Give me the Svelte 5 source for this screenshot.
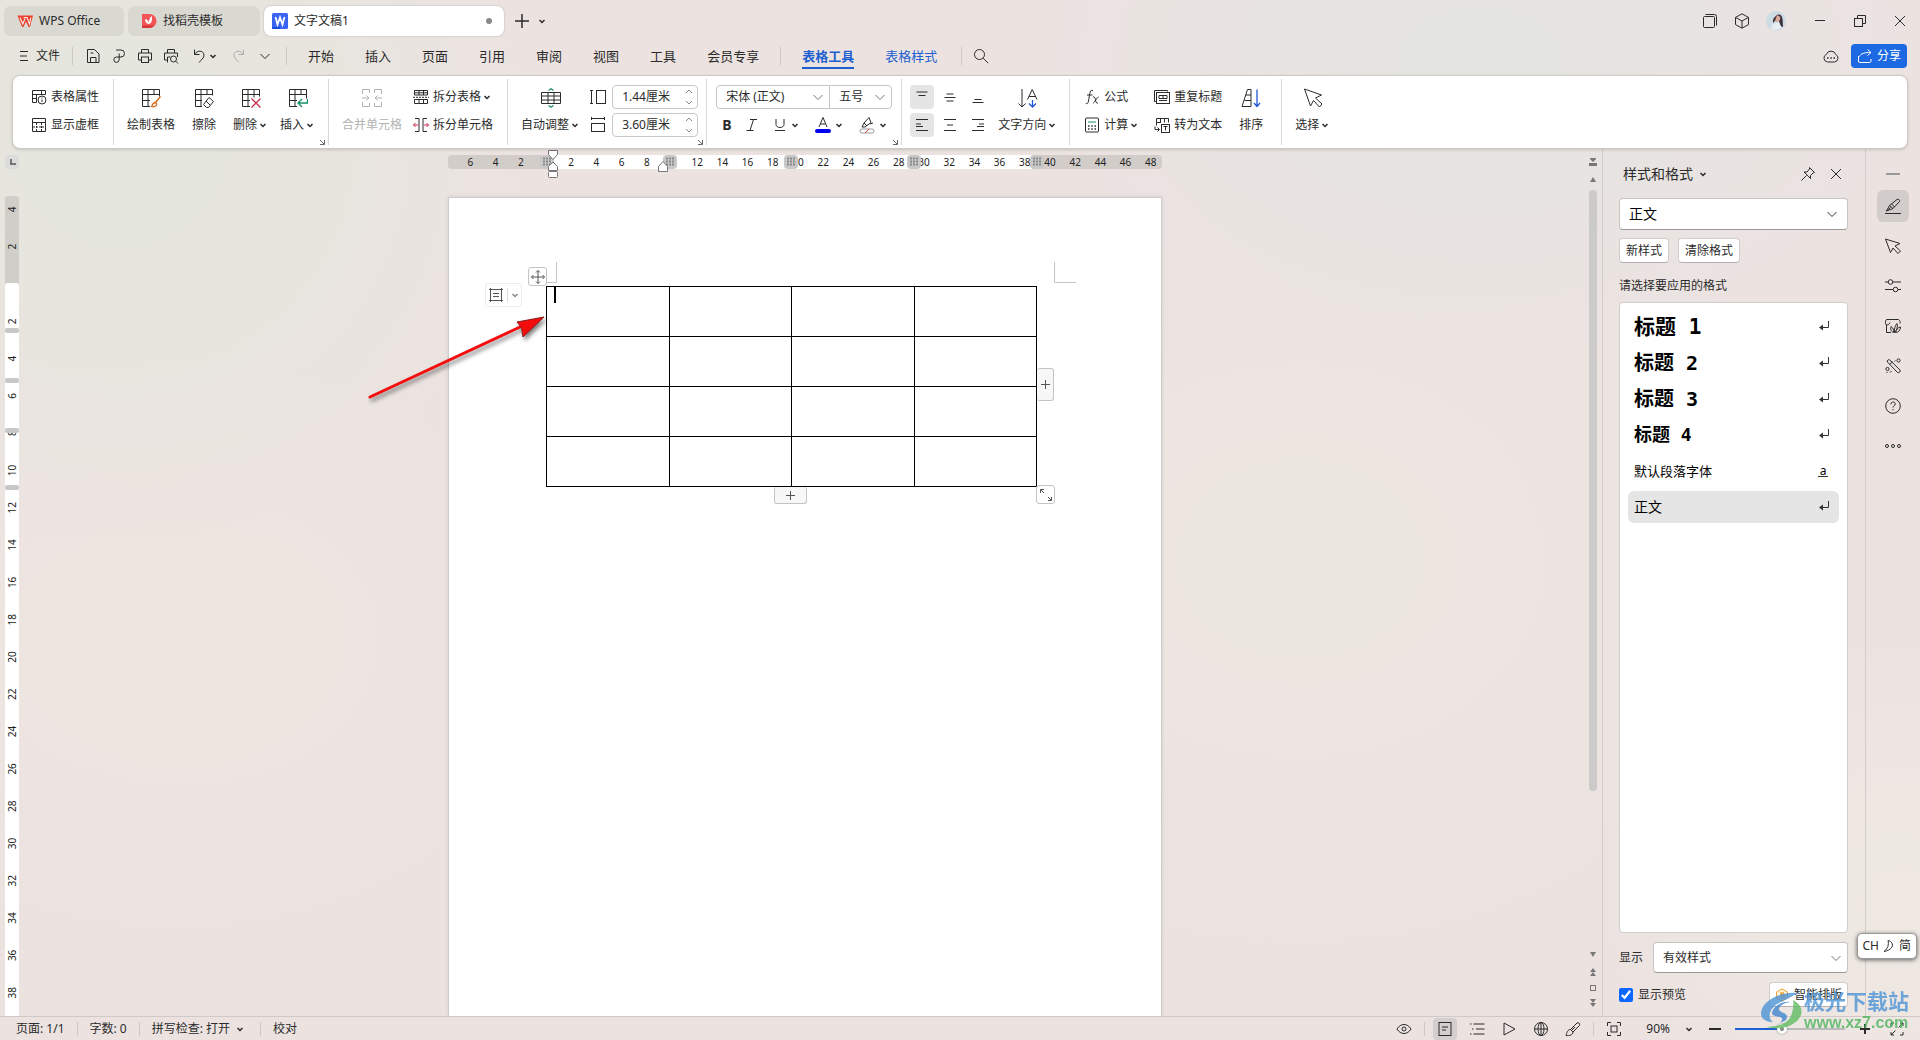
<script>
  const menuTabs = ['开始', '插入', '页面', '引用', '审阅', '视图', '工具', '会员专享'];

  const styles = [
    { name: '标题 1', kind: 'h1' },
    { name: '标题 2', kind: 'h2' },
    { name: '标题 3', kind: 'h3' },
    { name: '标题 4', kind: 'h4' },
    { name: '默认段落字体', kind: 'char' },
    { name: '正文', kind: 'body' }
  ];

  // horizontal ruler: one unit is two characters wide
  const hStep = 25.2;
  const hZero = 98;
  const hTicks = [-6, -4, -2, ...Array.from({ length: 24 }, (_, i) => (i + 1) * 2)].filter((n) => n !== 10);
  const colGrips = [99, 222, 343, 466, 589];

  const vStep = 37.3;
  const vZero = 88;
  const vTicks = [-4, -2, ...Array.from({ length: 19 }, (_, i) => (i + 1) * 2)];
  const rowGrips = [132, 182, 232, 289];

  let showPreview = $state(true);
  let active = $state('正文');

  const icons = {
    // logos
    wps: '<path d="M.5 2.500h15.500l-3 11.500h-1.500L9 8.500 6.500 14H5z" fill="#f0402c" stroke="none"/><path d="M3 4.500l2.800 6.500L8 5.500M6.500 4.500H10l2.500 6.500 1.300-6.500" stroke="#eee" stroke-width="1.100"/>',
    docer: '<path d="M1 1h7.500a6.500 6.500 0 0 1 0 14H1z" fill="#f25555" stroke="none"/><path d="M1 12.500h12a7 7 0 0 1-4.500 2.500H1z" fill="#d8343c" stroke="none"/><path d="M8 11C4.500 10.500 4 8 4.300 6 6.500 6.500 7.500 8 8 10c0-3 .5-5.500 3-7-.2 4 .6 6.500-3 8z" fill="#fff" stroke="none"/>',
    writer: '<rect x="0" y="0" width="16" height="16" rx="1.500" fill="#3a63f6" stroke="none"/><path d="M0 14h8v2H1.500A1.500 1.500 0 0 1 0 14.500z" fill="#1747d8" stroke="none"/><path d="M3.500 4l2 7.500L8 4.500l2.500 7L12.500 4" stroke="#fff" stroke-width="1.800"/>',
    // title bar
    plus: '<path d="M8 1v14M1 8h14" stroke-width="1.500"/>',
    windows: '<rect x="1.500" y="3.500" width="11" height="11" rx="1"/><path d="M3.500 1.500h9a2 2 0 0 1 2 2v9"/>',
    cube: '<path d="M8 .8l6.500 3.600v7.200L8 15.200l-6.500-3.600V4.400zM1.500 4.400L8 8l6.500-3.600M8 8v7"/>',
    min: '<path d="M3 7.500h10"/>',
    restore: '<rect x="2.500" y="5.500" width="8" height="8"/><path d="M5.500 5V2.500h8v8H11"/>',
    close: '<path d="M3 3l10 10M13 3L3 13"/>',
    // quick access
    burger: '<path d="M4 3.500h8M4 8h7M4 12.500h8"/>',
    save: '<path d="M2.500 1.500h7l4.500 4.500v8.500H2.500zM5.500 14.500V9.500h5.500v5M5.500 5h3"/>',
    export: '<path d="M5 2h5a3.500 3.500 0 0 1 0 7H5.500a2.700 2.700 0 1 0 2.700 2.700V5.500"/>',
    print: '<path d="M4.500 5V1.500h7V5M4 12H1.500V5h13v7H12"/><rect x="4.500" y="9" width="7" height="5.500"/>',
    preview: '<path d="M4.500 5V1.500h7V5M4 12H1.500V5h13v4M4.500 14.500v-5.500h3"/><circle cx="10.500" cy="11" r="3"/><path d="M12.700 13.200l2.300 2.300"/>',
    undo: '<path d="M3.500 1.500v5h5M3.500 6.500c2.500-4.500 9-4.500 9.500.5.200 3-3 5-5 7.500"/>',
    redo: '<path d="M12.500 1.500v5h-5M12.500 6.500C10 2 3.500 2 3 7c-.2 3 3 5 5 7.500"/>',
    down: '<path d="M3.500 6l4.500 4.500L12.500 6"/>',
    search: '<circle cx="6.500" cy="6.500" r="5"/><path d="M10.200 10.200L15.200 15.200"/>',
    cloud: '<path d="M4.500 14a4 4 0 0 1-1.200-7.600 5 5 0 0 1 9.400 0A4 4 0 0 1 11.500 14z"/><path d="M4 10h1.500M7.300 10h1.500M10.500 10H12" stroke-width="1.500"/>',
    share: '<path d="M1.500 8v5a1.500 1.500 0 0 0 1.500 1.500h9.500a1.500 1.500 0 0 0 1.500-1.500v-2M2.500 8.500C4 5.500 7 4.500 14 4.500M10.500 1.500l3.500 3-3.500 3"/>',
    // ribbon, small
    props: '<path d="M5.500 13.500h-4v-12h13v4M1.500 5.500h13M5.500 5.500v8M1.500 9.500h4M10.500 1.500v4"/><circle cx="11" cy="11" r="4"/><path d="M11 10.500v2.500M11 8.500v1"/>',
    dashed: '<path d="M1.500 1.500h13v13h-13zM1.500 5.500h13"/><path d="M5.500 6v8M10.500 6v8M2 10h12" stroke-dasharray="2 1"/>',
    splitTable: '<path d="M1.500 6V1.500h13V6zM6 1.500V6M10.500 1.500V6M1.500 14.500V10.500h13v4zM6 10.500v4M10.500 10.500v4M1.500 3.800h13"/><path d="M0 8.300h16" stroke-dasharray="2 1"/>',
    splitCell: '<path d="M2 1.500h4v13H2M14 1.500h-4v13h4"/><path d="M5 8H.5M2.500 6l-2 2 2 2M11 8h4.500M13.500 6l2 2-2 2" stroke="#c9304f"/>',
    rowH: '<path d="M0 1.500h3M1.500 1.500v13M0 14.500h3"/><rect x="6.500" y="1.500" width="9" height="13"/>',
    colW: '<path d="M1.500 0v3M1.500 1.500h13M14.500 0v3"/><rect x="1.500" y="6.500" width="13" height="8"/>',
    vTop: '<path d="M2.500 3h11M4.500 6.500h7"/>',
    vMid: '<path d="M4.500 5h7M2.500 8.500h11M4.500 12h7"/>',
    vBot: '<path d="M4.500 10.500h7M2.500 13.500h11"/>',
    left: '<path d="M2 2.500h12M2 7h5M2 9.500h7M2 13.500h12"/>',
    center: '<path d="M2 2.500h12M5 8h6M2 13.500h12"/>',
    right: '<path d="M2 2.500h12M9 7h5M7 9.500h7M2 13.500h12"/>',
    calc: '<rect x="1.500" y="1" width="13" height="14" rx="1"/><path d="M4 5h8" stroke="#17906a"/><path d="M4 9h1.500M7.300 9h1.500M10.500 9H12M4 12h1.500M7.300 12h1.500M10.500 12H12" stroke-width="1.500"/>',
    repeat: '<path d="M2.500 12.500H.5v-11h13v1"/><rect x="2.500" y="3.500" width="13" height="11"/><path d="M5 6.500h8v3H5zM9 6.500v3M5 11.500h8"/>',
    toText: '<path d="M7 5.500H2.500v-4h12v4M6.500 1.500v4M10.500 1.500v4M2.500 5.500v3M1 9.500v3h4M3.500 10.500l2 2-2 2"/><rect x="7.500" y="7.500" width="8" height="8"/><path d="M9.500 9.500h4M11.500 9.500v4"/>',
    formula: '<path d="M9 1.500c-2-.8-2.800.5-3.300 3.500l-1.200 7c-.4 2.200-1.200 3-2.700 2.500M3 6h5.500M9 8c1.500-.5 2 .5 2.500 3s1 3.500 2.500 3M14.500 8c-1.500 0-4 6-5.500 6"/>',
    // ribbon, large
    draw: '<path d="M9 18.500H1.500v-17h17v7M1.500 6.500h17M7 1.500v17M1.500 12.500H9M13 1.500v5"/><path d="M19.500 8.500l-5 6M14 14.500c1.500 0 2 1.500 1.500 2.500-1 2-4 2-5 1.500 1-1 .5-3.500 3.500-4z" stroke="#d2691e" stroke-width="1.300"/>',
    erase: '<path d="M8 18.500H1.500v-17h17v6M1.500 6.500h17M7 1.500v17M1.500 12.500H8M13 1.500v5"/><path d="M15 9.500l4.500 4-5 6h-2L9.500 16.500zM12 13l4 4"/>',
    del: '<path d="M9 18.500H1.500v-17h17v7M1.500 6.500h17M7 1.500v17M1.500 12.500H9M13 1.500v8"/><path d="M10.500 10.500l9 9M19.500 10.500l-9 9" stroke="#c9304f" stroke-width="1.300"/>',
    insert: '<path d="M9 18.500H1.500v-17h17v9M1.500 6.500h17M7 1.500v17M1.500 12.500H9M13 1.500v5"/><path d="M19.500 11v4h-9M14 11l-4 4 4 4" stroke="#17906a" stroke-width="1.300"/>',
    merge: '<path d="M.5 6V1.500h7V5M.5 14v4.500h7V15M19.500 6V1.500h-7V5M19.500 14v4.500h-7V15M0 10h7M4.500 7.500L7 10l-2.500 2.500M20 10h-7M15.500 7.500L13 10l2.500 2.500"/>',
    auto: '<path d="M.5 4.500h19v11H.5zM.5 8h19M.5 12h19M7 4.500v11M13 4.500v11"/><path d="M7.500 2.500L10 .8l2.500 1.700M7.500 17.500l2.500 1.700 2.500-1.700" stroke="#17906a" stroke-width="1.300"/>',
    textDir: '<path d="M4 1v18M0.500 15.500L4 19l3.500-3.500M9.500 11.500l4.700-10 4.800 10M11 8.500h6.500"/><path d="M14.500 12v7M11 15.500l3.500 3.500 3.500-3.500" stroke="#2457d6" stroke-width="1.300"/>',
    sort: '<path d="M6.500 1.500H10v17H1zM5 7h5M3.500 12.500H10"/><path d="M16 1.500v17M13 15l3 3.500 3-3.500" stroke="#2457d6" stroke-width="1.300"/>',
    cursorBig: '<path d="M1.500 1l17 6-6 3 6.500 6-2.500 3-6-6.500-3 5.500z"/>',
    // panes
    pin: '<path d="M9.500 1.500l5 5-1.500.5-2.500 2.500v3L4 6h3L9.500 3zM6.500 9.500L1.500 14.500"/>',
    pen: '<path d="M0 15.500h16M1.500 13l3-5.500L12 1.500c1.500-1 3.500 1 2.500 2L8 10.500zM4.500 7.500L8 10.500M6.500 5.800l3 3.200M1.500 13l4-3.500"/>',
    cursor: '<path d="M.5 1l14.500 4.500-5 2.500 5.500 5-2.500 2.500-5-5.500-2.500 4.500z"/>',
    sliders: '<path d="M0 4h3M8 4h8M0 11.500h8M13 11.500h3"/><circle cx="5.500" cy="4" r="2.300"/><circle cx="10.500" cy="11.500" r="2.300"/>',
    leaf: '<path d="M6 14.500H1.500V7C0 6 0 3 1.500 1.500h12c1.500 1 2 2.500 1.500 4M1.500 7c2 0 3-1 3.500-2.500M8.500 14.500c-3-1-3-4-2.500-6 2 1.500 3 3 2.500 6zM9.500 14.500c-.5-3 .5-7 2.500-9 1 3 0 7-2.500 9zM10.500 14.500c.5-2.500 2-5 5-5.500 0 3-2 5.500-5 5.500z"/>',
    tools: '<path d="M2.500 4c-1-1.500 1-3 2.300-2L15 12c1 1.500-1 3.500-2.500 2.500zM4.500 6.500l3-2.700"/><circle cx="13.500" cy="2.500" r="1.600"/><circle cx="2.500" cy="11" r="1.600"/><path d="M9.500 3.500l1-1M1.500 15l1-1M5 14.500l1.500-1.500"/>',
    help: '<circle cx="8" cy="8" r="7.300"/><path d="M5.800 6.300c0-3 4.500-3 4.500-.3 0 1.700-2.300 1.700-2.300 3.500M8 11v1.300"/>',
    more: '<circle cx="2" cy="8" r="1.500"/><circle cx="8" cy="8" r="1.500"/><circle cx="14" cy="8" r="1.500"/>',
    // status bar
    eye: '<path d="M1 8c3.500-6 10.500-6 14 0-3.500 6-10.500 6-14 0z"/><circle cx="8" cy="8" r="2"/>',
    pageView: '<rect x="2" y="1.500" width="12" height="13"/><path d="M5 6h6M5 9h4"/>',
    outline: '<path d="M4.500 3h11M7 8h8.500M4.500 13h11M1 3h1.500M3 8h1.500M1 13h1.500"/>',
    play: '<path d="M3 2l11 6-11 6z"/>',
    globe: '<circle cx="8" cy="8" r="6.500"/><path d="M1.500 8h13M8 1.500v13"/><ellipse cx="8" cy="8" rx="3" ry="6.500"/>',
    brush: '<path d="M5.500 8.500l6.500-6.500c1.500-1 3.500.8 2.500 2.500L8 11zM5.500 8.500c-3 0-3.500 3-4.500 6 3.500.5 7-.5 7-3.500zM10 6l-3.500 3.500"/>',
    fit: '<path d="M1.500 5V1.500H5M11 1.500h3.500V5M14.500 11v3.500H11M5 14.500H1.500V11"/><rect x="5" y="5" width="6" height="6"/>',
    full: '<path d="M2 5V2h3M11 2h3v3M14 11v3h-3M5 14H2v-3M9.500 6.500L14 2M6.500 9.500L2 14"/>'
  };
</script>

{#snippet icon(name, size = 16)}
  <svg class="icon" width={size} height={size} viewBox="0 0 {size} {size}" aria-hidden="true">{@html icons[name]}</svg>
{/snippet}

{#snippet caret()}
  <svg class="caret" width="12" height="10" viewBox="0 0 12 10" aria-hidden="true"><path d="M3.500 4L6 6.500 8.500 4" /></svg>
{/snippet}

{#snippet big(name, label, menu = false, disabled = false)}
  <button class="big" class:menu {disabled}>
    {@render icon(name, 20)}
    <span class="label">{label}{#if menu}{@render caret()}{/if}</span>
  </button>
{/snippet}

{#snippet small(name, label, menu = false)}
  <button class="small">{@render icon(name)}<span class="label">{label}{#if menu}{@render caret()}{/if}</span></button>
{/snippet}

{#snippet launcher()}
  <button class="launcher" aria-label="更多设置">
    <svg width="6" height="6" viewBox="0 0 6 6"><path d="M1 1l4 4M5.500 1v4.500H1" /></svg>
  </button>
{/snippet}

{#snippet spin(name, label, value)}
  <label class="spin">
    {@render icon(name)}
    <span class="field">
      <input type="text" {value} aria-label={label} />
      <svg width="12" height="18" viewBox="0 0 12 18" aria-hidden="true"><path d="M3 5l3-3 3 3M3 13l3 3 3-3" /></svg>
    </span>
  </label>
{/snippet}

<div class="app">
  <header class="titlebar">
    <button class="doc-tab home">{@render icon('wps')}WPS Office</button>
    <button class="doc-tab store">{@render icon('docer')}找稻壳模板</button>
    <button class="doc-tab current">{@render icon('writer')}文字文稿1<i class="dot"></i></button>
    <button class="bare new-tab" aria-label="新建">{@render icon('plus')}</button>
    <button class="bare" aria-label="标签列表">{@render caret()}</button>
    <div class="window-tools">
      <button class="bare" aria-label="工作区">{@render icon('windows')}</button>
      <button class="bare" aria-label="应用">{@render icon('cube')}</button>
      <svg class="avatar" width="20" height="20" viewBox="0 0 20 20">
        <circle cx="10" cy="10" r="10" fill="#cddbe4" />
        <path d="M10 5c3-3 6-1 6.500 3l.5 8c-2 0-3-3-4-6z" fill="#3a2c38" />
        <path d="M9 6c1-2 4-2 5 0s-1 5-3 5-3-3-2-5z" fill="#dba998" />
        <path d="M5 18c1-5 4-7 8-6l2 5c-3 2-7 3-10 1z" fill="#e6eef4" />
        <path d="M7 12c-.5-4 1-6 4-7.500L9 10z" fill="#4a3a40" />
      </svg>
    </div>
    <div class="window-controls">
      <button class="bare" aria-label="最小化">{@render icon('min')}</button>
      <button class="bare" aria-label="还原">{@render icon('restore')}</button>
      <button class="bare" aria-label="关闭">{@render icon('close')}</button>
    </div>
  </header>

  <nav class="menubar">
    <button class="bare file">{@render icon('burger')}文件</button>
    <span class="sep"></span>
    <div class="quick">
      <button class="bare" aria-label="保存">{@render icon('save')}</button>
      <button class="bare" aria-label="输出">{@render icon('export')}</button>
      <button class="bare" aria-label="打印">{@render icon('print')}</button>
      <button class="bare" aria-label="打印预览">{@render icon('preview')}</button>
      <button class="bare undo" aria-label="撤销">{@render icon('undo')}{@render caret()}</button>
      <button class="bare faded" aria-label="恢复">{@render icon('redo')}</button>
      <button class="bare" aria-label="自定义">{@render icon('down')}</button>
    </div>
    <span class="sep"></span>
    <div class="tabs">
      {#each menuTabs as tab}
        <button class="bare">{tab}</button>
      {/each}
    </div>
    <span class="sep"></span>
    <div class="tabs context">
      <button class="bare on">表格工具</button>
      <button class="bare">表格样式</button>
    </div>
    <span class="sep"></span>
    <button class="bare find" aria-label="搜索">{@render icon('search')}</button>
    <div class="menu-right">
      <button class="bare" aria-label="云同步">{@render icon('cloud')}</button>
      <button class="share">{@render icon('share')}分享</button>
    </div>
  </nav>

  <section class="ribbon">
    <div class="group wide">
      <div class="rows">
        {@render small('props', '表格属性')}
        {@render small('dashed', '显示虚框')}
      </div>
    </div>
    <div class="group edit">
      {@render big('draw', '绘制表格')}
      {@render big('erase', '擦除')}
      {@render big('del', '删除', true)}
      {@render big('insert', '插入', true)}
      {@render launcher()}
    </div>
    <div class="group cells">
      {@render big('merge', '合并单元格', false, true)}
      <div class="rows">
        {@render small('splitTable', '拆分表格', true)}
        {@render small('splitCell', '拆分单元格')}
      </div>
    </div>
    <div class="group">
      {@render big('auto', '自动调整', true)}
      <div class="rows sizes">
        {@render spin('rowH', '行高', '1.44厘米')}
        {@render spin('colW', '列宽', '3.60厘米')}
      </div>
      {@render launcher()}
    </div>
    <div class="group fonts">
      <div class="rows">
        <div class="combo">
          <span class="pick family">
            <select aria-label="字体"><option>宋体 (正文)</option></select>
            {@render icon('down')}
          </span>
          <span class="pick size">
            <select aria-label="字号"><option>五号</option></select>
            {@render icon('down')}
          </span>
        </div>
        <div class="format">
          <button class="bare bold">B</button>
          <button class="bare italic" aria-label="倾斜">
            <svg class="icon" width="14" height="14" viewBox="0 0 14 14"><path d="M5 1.500h7M1.500 12.500h7M8.500 1.500l-3.500 11" /></svg>
          </button>
          <button class="bare" aria-label="下划线">
            <svg class="icon" width="14" height="14" viewBox="0 0 14 14"><path d="M3 1v5.500c0 4 8 4 8 0V1M2 12.500h10" /></svg>
            {@render caret()}
          </button>
          <button class="bare" aria-label="字体颜色">
            <svg class="icon" width="16" height="18" viewBox="0 0 16 18">
              <path d="M4 11l4-9.500L12 11M5.500 8h5" />
              <rect x="0" y="13" width="16" height="4" rx="2" fill="#0000f0" stroke="none" />
            </svg>
            {@render caret()}
          </button>
          <button class="bare" aria-label="底纹">
            <svg class="icon" width="16" height="18" viewBox="0 0 16 18">
              <path d="M3 11l2-4 5-5.500 2 5-4 3-2 1.500zM5 7l3 3M11 8l3-1" />
              <rect x="1" y="13" width="14" height="4" rx="2" stroke="#999" />
              <path d="M6 17l4-4" stroke="#e04545" />
            </svg>
            {@render caret()}
          </button>
        </div>
      </div>
      {@render launcher()}
    </div>
    <div class="group aligns">
      <div class="align-grid">
        {#each ['vTop', 'vMid', 'vBot', 'left', 'center', 'right'] as a}
          <button class="bare" class:on={a === 'vTop' || a === 'left'} aria-label={a}>{@render icon(a)}</button>
        {/each}
      </div>
      {@render big('textDir', '文字方向', true)}
    </div>
    <div class="group data">
      <div class="rows">
        {@render small('formula', '公式')}
        {@render small('calc', '计算', true)}
      </div>
      <div class="rows second">
        {@render small('repeat', '重复标题')}
        {@render small('toText', '转为文本')}
      </div>
      {@render big('sort', '排序')}
    </div>
    <div class="group last">
      {@render big('cursorBig', '选择', true)}
    </div>
  </section>

  <main class="workspace">
    <div class="gutter">
      <svg class="tab-stop" width="14" height="14" viewBox="0 0 14 14">
        <rect width="14" height="14" rx="3" fill="#dcdcdc" />
        <path d="M6 4v5h5" fill="none" stroke="#777" stroke-width="2" />
      </svg>
      <svg class="v-ruler" width="14" height="820">
        <rect width="14" height="100" rx="3" fill="#cfcec8" />
        <rect y="87" width="14" height="740" rx="3" fill="#fff" />
        {#each vTicks as n}
          <text transform="translate(11 {vZero + (n / 2) * vStep}) rotate(-90)">{Math.abs(n)}</text>
        {/each}
        {#each rowGrips as y}
          <rect {y} width="14" height="5" rx="2" fill="#c8c8ca" />
        {/each}
      </svg>
    </div>

    <div class="canvas">
      <svg class="h-ruler" width="714" height="48">
        <rect y="6" width="714" height="14" rx="4" fill="#d3cdca" />
        <rect x="104" y="6" width="486" height="14" fill="#fff" />
        {#each hTicks as n}
          <text x={hZero + (n / 2) * hStep} y="17">{Math.abs(n)}</text>
        {/each}
        {#each colGrips as x}
          <rect x={x - 7} y="6" width="14" height="14" rx="4" fill="#c8c8c8" />
          <path d="M{x - 4} 9.500h9M{x - 4} 12.500h9M{x - 4} 15.500h9" stroke="#888" stroke-width="2" stroke-dasharray="2 1" />
        {/each}
        <g class="marker">
          <path d="M100.500 1.500h9v4l-4.500 5-4.500-5z" />
          <path d="M100.500 21.500v-4l4.500-4.500 4.500 4.500v4z" />
          <rect x="100.500" y="22.500" width="9" height="6" rx="1" />
          <path d="M210.500 22.500v-5l4.500-5 4.500 5v5z" />
        </g>
      </svg>

      <article class="paper">
        <div class="table-box">
          <svg class="corner start" width="12" height="22" viewBox="0 0 12 22"><path d="M11.500 0v20.500H0" /></svg>
          <svg class="corner end" width="22" height="22" viewBox="0 0 22 22"><path d="M.5 0v20.500H22" /></svg>
          <table aria-label="文档表格">
            <tbody>
              {#each Array(4) as _, r}
                <tr>
                  {#each Array(4) as _, c}
                    <td>{#if r === 0 && c === 0}<i class="text-caret"></i>{/if}</td>
                  {/each}
                </tr>
              {/each}
            </tbody>
          </table>
          <button class="handle move" aria-label="移动表格">
            <svg width="14" height="14" viewBox="0 0 14 14"><path d="M7 .5v13M.5 7h13M5 2.500L7 .5l2 2M5 11.500l2 2 2-2M2.500 5L.5 7l2 2M11.500 5l2 2-2 2" /></svg>
          </button>
          <button class="handle options" aria-label="布局选项">
            <svg width="14" height="14" viewBox="0 0 14 14"><path d="M1.500 1.500h11v11h-11zM4 5.500h6M4 8.500h6M0 1.500h3M11 1.500h3M0 12.500h3M11 12.500h3M1.500 0v3M12.500 0v3M1.500 11v3M12.500 11v3" /></svg>
            <span></span>
            {@render caret()}
          </button>
          <button class="handle add-col" aria-label="添加列">
            <svg width="9" height="9" viewBox="0 0 9 9"><path d="M4.500 0v9M0 4.500h9" /></svg>
          </button>
          <button class="handle add-row" aria-label="添加行">
            <svg width="9" height="9" viewBox="0 0 9 9"><path d="M4.500 0v9M0 4.500h9" /></svg>
          </button>
          <button class="handle resize" aria-label="调整大小">
            <svg width="14" height="14" viewBox="0 0 14 14"><path d="M1.500 5V1.500H5M1.500 1.500l3.500 3.500M12.500 9v3.500H9M12.500 12.500L9 9" /></svg>
          </button>
          <svg class="pointer" width="190" height="100" viewBox="0 0 190 100">
            <path d="M6 87L156 17" stroke="#f40d0d" stroke-width="3" stroke-linecap="round" />
            <path d="M180 7L153 12l4.500 5.500L159 27z" fill="#f40d0d" stroke="#8c1a1a" stroke-width="1" />
          </svg>
        </div>
      </article>
    </div>

    <div class="scroller">
      <svg width="10" height="36" viewBox="0 0 10 36"><path d="M2 0h6v1L5 4 2 1zM1 5h8v3H1zM5 19l3 5H2z" /></svg>
      <div class="thumb"></div>
      <svg width="10" height="66" viewBox="0 0 10 66">
        <path d="M2 2h6L5 7zM5 18l3 4H2zM5 22l3 4H2zM2 49h6l-3 4zM2 53h6l-3 4z" />
        <rect x="2.500" y="35.500" width="5" height="5" class="hollow" />
      </svg>
    </div>

    <aside class="pane">
      <div class="pane-head">
        <button class="bare title">样式和格式{@render caret()}</button>
        <button class="bare" aria-label="固定">{@render icon('pin')}</button>
        <button class="bare" aria-label="关闭窗格">{@render icon('close')}</button>
      </div>
      <span class="pick current-style">
        <select aria-label="当前样式"><option>正文</option></select>
        {@render icon('down')}
      </span>
      <div class="pane-actions">
        <button class="soft">新样式</button>
        <button class="soft">清除格式</button>
      </div>
      <p>请选择要应用的格式</p>
      <div class="style-list">
        {#each styles as s}
          <button class="style {s.kind}" class:selected={active === s.name} onclick={() => (active = s.name)}>
            <span>{s.name}</span>
            {#if s.kind === 'char'}
              <em>a</em>
            {:else}
              <svg width="12" height="12" viewBox="0 0 12 12"><path d="M10.500 0v6.500H3" /><path d="M5 3.500v6l-4-3z" class="solid" /></svg>
            {/if}
          </button>
        {/each}
      </div>
      <div class="show-row">
        <label for="show">显示</label>
        <span class="pick filter">
          <select id="show"><option>有效样式</option></select>
          {@render icon('down')}
        </span>
      </div>
      <div class="preview-row">
        <label><input type="checkbox" bind:checked={showPreview} />显示预览</label>
        <button class="soft smart">
          <svg width="14" height="14" viewBox="0 0 14 14"><path d="M7 1l5.500 3v6L7 13l-5.500-3V4z" fill="#fff3dc" stroke="#f0a030" /><path d="M9 5H6v2h3v2.500H5.500" fill="none" stroke="#f0a030" stroke-width="1.500" /></svg>
          智能排版
        </button>
      </div>
    </aside>

    <div class="strip">
      <i class="dash"></i>
      {#each ['pen', 'cursor', 'sliders', 'leaf', 'tools', 'help', 'more'] as t}
        <button class="bare" class:on={t === 'pen'} aria-label={t}>{@render icon(t)}</button>
      {/each}
    </div>
  </main>

  <footer class="status">
    <span>页面: 1/1</span>
    <i class="sep"></i>
    <span>字数: 0</span>
    <i class="sep"></i>
    <button class="bare spell">拼写检查: 打开{@render caret()}</button>
    <i class="sep"></i>
    <button class="bare">校对</button>
    <div class="views">
      <button class="bare" aria-label="护眼">{@render icon('eye')}</button>
      <i class="sep"></i>
      <button class="bare on" aria-label="页面视图">{@render icon('pageView')}</button>
      <button class="bare" aria-label="大纲">{@render icon('outline')}</button>
      <button class="bare" aria-label="阅读">{@render icon('play')}</button>
      <button class="bare" aria-label="网页">{@render icon('globe')}</button>
      <button class="bare" aria-label="写作">{@render icon('brush')}</button>
      <i class="sep"></i>
      <button class="bare" aria-label="适合页面">{@render icon('fit')}</button>
      <button class="bare percent">90%{@render caret()}</button>
      <button class="bare" aria-label="缩小"><svg class="icon heavy" width="12" height="12" viewBox="0 0 12 12"><path d="M0 6h12" /></svg></button>
      <input type="range" min="0" max="100" value="42" aria-label="缩放" />
      <button class="bare" aria-label="放大"><svg class="icon heavy" width="12" height="12" viewBox="0 0 12 12"><path d="M1 6h10M6 1v10" /></svg></button>
      <button class="bare" aria-label="全屏">{@render icon('full')}</button>
    </div>
  </footer>

  <div class="ime">CH
    <svg width="12" height="14" viewBox="0 0 12 14"><path d="M5 1.500c6 1 7 9-4 11 4-3 5-7 4-11z" /></svg>
    简</div>

  <div class="watermark">
    <svg width="44" height="40" viewBox="0 0 44 40">
      <path d="M38 2C20 0 2 10 1 22c0 6 5 9 12 9-6-4-4-14 6-19 6-3 12-6 19-10z" fill="#4d94d6" />
      <path d="M12 22c1-7 10-12 18-11-6 1-11 4-11 7 0 4 8 3 8 8 0 3-3 5-7 5 3-2 3-4 0-5-4-1-8-1-8-4z" fill="#3f86cf" />
      <path d="M33 9c10 5 11 14 4 21-8 7-20 9-31 6 12 0 22-4 25-11 2-6 3-10 2-16z" fill="#62bd63" />
    </svg>
    <div>
      <b>极光下载站</b>
      <span>www.xz7.com</span>
    </div>
  </div>
</div>

<style>
  :global(body) {
    background: #ebe3e0;
  }
  .app {
    position: relative;
    display: flex;
    flex-direction: column;
    height: 100vh;
    overflow: hidden;
    color: #2b2b2b;
    font: 12px/16px "Noto Sans", "Noto Sans CJK SC", sans-serif;
    background:
      radial-gradient(ellipse 420px 420px at 120px 140px, #e5e6dd 20%, transparent),
      radial-gradient(ellipse 460px 300px at 1480px 60px, #e4e4e1 10%, transparent),
      radial-gradient(ellipse 500px 400px at 1300px 560px, #ece6e0, transparent),
      radial-gradient(ellipse 400px 300px at 180px 640px, #efe5e0, transparent),
      radial-gradient(ellipse 300px 260px at 1900px 900px, #efe9e2, transparent),
      #ece3e1;
  }
  button,
  select,
  input {
    margin: 0;
    padding: 0;
    font: inherit;
    color: inherit;
  }
  button {
    display: flex;
    align-items: center;
    border: 0;
    background: none;
    white-space: nowrap;
  }
  .bare {
    justify-content: center;
  }
  svg {
    display: block;
    flex: none;
  }
  .icon,
  .caret {
    fill: none;
    stroke: currentColor;
  }
  .caret {
    stroke-width: 1.5;
  }
  .heavy {
    stroke-width: 2;
  }
  .label {
    display: flex;
    align-items: center;
  }
  .sep {
    flex: none;
    width: 1px;
    height: 18px;
    background: #cfc9c6;
  }

  /* title bar */
  .titlebar {
    display: flex;
    align-items: center;
    gap: 4px;
    height: 30px;
    padding: 6px 12px 0 4px;
  }
  .doc-tab {
    gap: 6px;
    height: 30px;
    padding: 0 13px;
    border-radius: 7px;
    background: #d9d9d2;
  }
  .home {
    width: 120px;
  }
  .store {
    width: 132px;
  }
  .current {
    width: 240px;
    padding: 0 12px 0 8px;
    background: #fff;
    box-shadow: 0 0 2px #aaa;
  }
  .dot {
    width: 6px;
    height: 6px;
    margin-left: auto;
    border-radius: 50%;
    background: #8a8a8a;
  }
  .new-tab {
    margin: 0 2px 0 6px;
  }
  .window-tools,
  .window-controls {
    display: flex;
    align-items: center;
    gap: 16px;
  }
  .window-tools {
    margin-left: auto;
  }
  .window-controls {
    gap: 24px;
    margin-left: 22px;
  }

  /* menu bar */
  .menubar {
    display: flex;
    align-items: center;
    height: 39px;
    padding: 0 13px 0 16px;
  }
  .file {
    gap: 4px;
    margin-right: 12px;
  }
  .quick {
    display: flex;
    margin: 0 8px 0 7px;
  }
  .quick .bare {
    width: 26px;
    height: 24px;
  }
  .quick .undo {
    width: 42px;
  }
  .faded {
    color: #b0aeac;
  }
  .tabs {
    display: flex;
    gap: 31px;
    margin: 0 21px;
    font-size: 13px;
  }
  .tabs .bare {
    height: 26px;
    padding-top: 2px;
    box-sizing: border-box;
    border-bottom: 2px solid transparent;
  }
  .context {
    margin-right: 24px;
    color: #1d5fd0;
  }
  .tabs .on {
    border-color: #1d5fd0;
    font-weight: 700;
  }
  .find {
    margin-left: 11px;
  }
  .menu-right {
    display: flex;
    align-items: center;
    gap: 12px;
    margin-left: auto;
  }
  .share {
    gap: 4px;
    height: 24px;
    padding: 0 6px;
    border-radius: 4px;
    background: #1c69e3;
    color: #fff;
  }

  /* ribbon */
  .ribbon {
    position: relative;
    z-index: 1;
    display: flex;
    flex: none;
    align-items: center;
    height: 74px;
    margin: 0 12px;
    border: 1px solid #cfcac7;
    border-radius: 8px;
    background: #fff;
    box-shadow: 0 1px 3px rgba(0, 0, 0, 0.15);
    box-sizing: border-box;
  }
  .group {
    position: relative;
    display: flex;
    align-items: center;
    gap: 1px;
    height: 66px;
    padding: 0 8px 0 5px;
    border-right: 1px solid #d6d6d6;
  }
  .wide {
    padding: 0 14px 0 18px;
  }
  .edit {
    padding-right: 10px;
  }
  .cells {
    padding-right: 14px;
  }
  .fonts {
    padding: 0 9px;
  }
  .aligns {
    gap: 0;
    padding: 0 9px 0 8px;
  }
  .data {
    padding: 0 10px 0 14px;
  }
  .last {
    border: 0;
  }
  .rows {
    display: flex;
    flex-direction: column;
    gap: 4px;
    margin: 0 0 2px 2px;
  }
  .wide .rows,
  .fonts .rows,
  .data .rows {
    margin-left: 0;
  }
  .data .second {
    margin: 0 8px 2px 13px;
  }
  .sizes {
    margin-left: 6px;
  }
  .small {
    gap: 4px;
    height: 24px;
  }
  .big {
    flex-direction: column;
    gap: 9px;
    padding: 0 8px 3px;
  }
  .big.menu {
    padding-right: 2px;
  }
  .big:disabled {
    color: #b2b2b2;
  }
  .launcher {
    position: absolute;
    right: 3px;
    bottom: 0;
  }
  .launcher svg {
    fill: none;
    stroke: #666;
  }
  .spin {
    display: flex;
    align-items: center;
    gap: 6px;
  }
  .field {
    display: flex;
    align-items: center;
    width: 86px;
    height: 24px;
    padding: 0 2px 0 9px;
    border: 1px solid #c8c8c8;
    border-radius: 4px;
    box-sizing: border-box;
  }
  .field input {
    flex: 1;
    min-width: 0;
    border: 0;
    background: none;
  }
  .field svg {
    fill: none;
    stroke: #888;
  }
  .pick {
    position: relative;
    display: flex;
    align-items: center;
    border: 1px solid #c8c4c2;
    border-radius: 4px;
    background: #fff;
    box-sizing: border-box;
  }
  .pick select {
    width: 100%;
    height: 100%;
    padding: 0 9px;
    border: 0;
    background: none;
    appearance: none;
  }
  .pick .icon {
    position: absolute;
    right: 7px;
    stroke: #777;
    pointer-events: none;
  }
  .combo {
    display: flex;
    height: 24px;
  }
  .family {
    width: 114px;
    border-radius: 4px 0 0 4px;
  }
  .family .icon,
  .size .icon,
  .filter .icon {
    right: 3px;
  }
  .size {
    width: 63px;
    margin-left: -1px;
    border-radius: 0 4px 4px 0;
  }
  .format {
    display: flex;
    align-items: center;
    justify-content: space-between;
    height: 24px;
    padding: 0 3px 0 6px;
  }
  .format .caret {
    margin-left: 2px;
  }
  .bold {
    font-size: 14px;
    font-weight: 700;
  }
  .align-grid {
    display: grid;
    grid-template-columns: repeat(3, 24px);
    gap: 4px;
    margin-bottom: 2px;
  }
  .align-grid .bare {
    height: 24px;
    border-radius: 4px;
  }
  .align-grid .on {
    background: #e5e5e5;
  }

  /* workspace */
  .workspace {
    display: flex;
    flex: 1;
    min-height: 0;
  }
  .gutter {
    display: flex;
    flex-direction: column;
    gap: 27px;
    width: 19px;
    padding: 6px 0 0 5px;
    overflow: hidden;
  }
  .v-ruler text,
  .h-ruler text {
    fill: #222;
    font-size: 10px;
    text-anchor: middle;
  }
  .canvas {
    display: flex;
    flex: 1;
    flex-direction: column;
    align-items: center;
    min-width: 0;
    overflow: hidden;
  }
  .marker {
    fill: #fff;
    stroke: #777;
  }
  .paper {
    flex: 1;
    width: 714px;
    padding: 88px 124px 0 97px;
    border: 1px solid #cfcbc9;
    border-bottom: 0;
    background: #fff;
    box-shadow: 0 0 4px rgba(0, 0, 0, 0.1);
    box-sizing: border-box;
  }
  .table-box {
    position: relative;
  }
  table {
    width: 100%;
    border-collapse: collapse;
    table-layout: fixed;
  }
  td {
    height: 50px;
    padding: 0 7px;
    border: 1px solid #000;
    vertical-align: top;
    box-sizing: border-box;
  }
  .text-caret {
    display: block;
    width: 2px;
    height: 16px;
    background: #000;
  }
  .corner {
    position: absolute;
    top: -24px;
    fill: none;
    stroke: #c4c4c4;
  }
  .start {
    left: -1px;
  }
  .end {
    left: 508px;
  }
  .handle {
    position: absolute;
    justify-content: center;
    width: 19px;
    height: 19px;
    border: 1px solid #c4c4c4;
    border-radius: 3px;
    background: #fff;
    box-sizing: border-box;
  }
  .handle svg {
    fill: none;
    stroke: #555;
  }
  .move {
    top: -19px;
    left: -18px;
  }
  .options {
    top: -3px;
    left: -61px;
    gap: 4px;
    width: 37px;
    height: 24px;
    border-color: #ececec;
  }
  .options span {
    width: 1px;
    height: 14px;
    background: #ddd;
  }
  .options .caret {
    margin: 0 -3px;
    stroke: #888;
  }
  .add-col {
    top: 82px;
    left: 100%;
    width: 17px;
    height: 33px;
    border-left: 0;
    background: #f7f7f7;
  }
  .add-row {
    top: 100%;
    left: 228px;
    width: 33px;
    height: 17px;
    border-top: 0;
    background: #f7f7f7;
  }
  .resize {
    top: 199px;
    left: 490px;
  }
  .pointer {
    position: absolute;
    top: 24px;
    left: -182px;
    fill: none;
    filter: drop-shadow(2px 3px 2px rgba(0, 0, 0, 0.5));
  }
  .scroller {
    display: flex;
    flex-direction: column;
    align-items: center;
    width: 14px;
    padding: 9px 2px 0 0;
  }
  .scroller svg {
    fill: #777;
  }
  .scroller .hollow {
    fill: none;
    stroke: #777;
  }
  .thumb {
    width: 8px;
    height: 70%;
    margin: -4px 0 auto;
    border-radius: 4px;
    background: #cdcbc9;
  }

  /* style pane */
  .pane {
    display: flex;
    flex-direction: column;
    width: 229px;
    padding: 9px 17px 9px 16px;
    border: solid #d2cdca;
    border-width: 0 1px;
  }
  .pane-head {
    display: flex;
    align-items: center;
    gap: 12px;
    height: 32px;
    padding: 0 4px;
  }
  .title {
    gap: 4px;
    margin-right: auto;
    font-size: 14px;
  }
  .current-style {
    height: 32px;
    margin-top: 8px;
    border-bottom-color: #999;
    color: #000;
    font-size: 14px;
  }
  .current-style .icon {
    stroke: #333;
  }
  .pane-actions {
    display: flex;
    gap: 9px;
    margin-top: 8px;
  }
  .soft {
    height: 25px;
    padding: 0 5px;
    border: 1px solid #d2cdca;
    border-bottom-color: #b5b0ad;
    border-radius: 4px;
    background: #fff;
  }
  .pane-actions .soft {
    padding: 0 6px;
  }
  p {
    margin: 15px 0 8px;
  }
  .style-list {
    display: flex;
    flex: 1;
    flex-direction: column;
    gap: 4px;
    padding: 8px;
    border: 1px solid #d2cdca;
    border-radius: 4px;
    background: #fff;
  }
  .style {
    justify-content: space-between;
    height: 32px;
    padding: 0 9px 0 6px;
    border-radius: 6px;
    color: #000;
  }
  .style svg {
    fill: none;
    stroke: #333;
  }
  .style .solid {
    fill: #333;
    stroke: none;
  }
  .style em {
    width: 10px;
    margin-right: 2px;
    border-bottom: 1px solid #333;
    font-size: 12px;
    font-style: normal;
    line-height: 11px;
    text-align: center;
  }
  .h1,
  .h2,
  .h3,
  .h4 {
    font: 700 20px/28px "DejaVu Sans Mono", "Noto Sans CJK SC", monospace;
  }
  .h1 {
    font-size: 21px;
  }
  .h4 {
    font-size: 18px;
  }
  .char {
    font-size: 13px;
  }
  .body {
    font-size: 14px;
  }
  .selected {
    background: #e5e5e5;
  }
  .show-row,
  .preview-row {
    display: flex;
    align-items: center;
    justify-content: space-between;
    margin-top: 9px;
  }
  .filter {
    width: 195px;
    height: 31px;
    border-bottom-color: #999;
  }
  .preview-row label {
    display: flex;
    align-items: center;
    gap: 5px;
  }
  input[type='checkbox'] {
    width: 14px;
    height: 14px;
    accent-color: #0a66ff;
  }
  .smart {
    gap: 5px;
  }
  .strip {
    display: flex;
    flex-direction: column;
    align-items: center;
    gap: 8px;
    width: 54px;
    padding-top: 24px;
  }
  .dash {
    width: 14px;
    height: 2px;
    margin-bottom: 7px;
    background: #999;
  }
  .strip .bare {
    width: 32px;
    height: 32px;
    border-radius: 6px;
  }
  .strip .on {
    background: #d2cdcb;
  }

  /* status bar */
  .status {
    display: flex;
    align-items: center;
    gap: 12px;
    height: 24px;
    padding: 0 11px 0 16px;
    border-top: 1px solid #cfc9c7;
    box-sizing: border-box;
  }
  .status .sep {
    height: 14px;
  }
  .spell {
    gap: 4px;
    margin-right: 2px;
  }
  .views {
    display: flex;
    align-items: center;
    gap: 8px;
    margin-left: auto;
  }
  .views .bare {
    min-width: 24px;
    height: 22px;
    border-radius: 4px;
  }
  .views .on {
    background: #d4cecc;
  }
  .percent {
    gap: 13px;
    margin-left: 12px;
  }
  input[type='range'] {
    width: 110px;
    height: 10px;
    background: linear-gradient(#1d5fd0, #1d5fd0) 0 50% / 42% 2px no-repeat, linear-gradient(#bbb, #bbb) 0 50% / 100% 2px no-repeat;
    appearance: none;
  }
  input[type='range']::-webkit-slider-thumb {
    width: 10px;
    height: 10px;
    border: 3px solid #fff;
    border-radius: 50%;
    background: #888;
    box-shadow: 0 0 2px #777;
    box-sizing: border-box;
    appearance: none;
  }

  .ime {
    position: absolute;
    right: 3px;
    bottom: 81px;
    z-index: 2;
    display: flex;
    align-items: center;
    gap: 4px;
    height: 26px;
    padding: 0 5px;
    border: 1px solid #999;
    border-radius: 5px;
    background: #fff;
    box-shadow: 0 1px 4px rgba(0, 0, 0, 0.6);
    box-sizing: border-box;
  }
  .ime svg {
    fill: none;
    stroke: #333;
  }
  .watermark {
    position: absolute;
    right: 11px;
    bottom: 7px;
    z-index: 3;
    display: flex;
    align-items: center;
    opacity: 0.8;
    pointer-events: none;
  }
  .watermark b {
    display: block;
    color: #4d94d6;
    font-size: 21px;
    line-height: 24px;
  }
  .watermark span {
    display: block;
    color: #4fb560;
    font: 700 16px/20px "Liberation Sans", sans-serif;
  }
</style>
